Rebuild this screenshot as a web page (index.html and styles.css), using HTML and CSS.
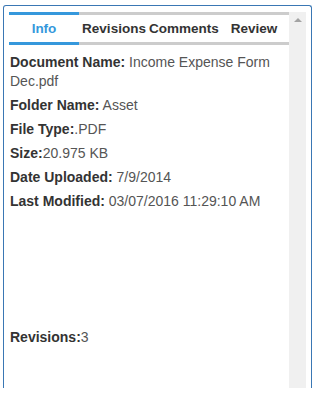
FILE: index.html
```html
<!DOCTYPE html>
<html>
<head>
<meta charset="utf-8">
<link rel="stylesheet" href="styles.css">
</head>
<body>
<div class="panel">
  <div class="content">
    <div class="tabs">
      <div class="tab active">Info</div>
      <div class="tab">Revisions</div>
      <div class="tab">Comments</div>
      <div class="tab">Review</div>
    </div>
    <div class="info">
      <p class="row"><b>Document Name:</b> Income Expense Form Dec.pdf</p>
      <p class="row"><b>Folder Name:</b> Asset</p>
      <p class="row"><b>File Type:</b>.PDF</p>
      <p class="row"><b>Size:</b>20.975 KB</p>
      <p class="row"><b>Date Uploaded:</b> 7/9/2014</p>
      <p class="row"><b>Last Modified:</b> 03/07/2016 11:29:10 AM</p>
      <div class="spacer"></div>
      <p class="row"><b>Revisions:</b>3</p>
    </div>
  </div>
  <div class="scrollbar">
    <div class="arrow"></div>
  </div>
</div>
</body>
</html>
```

FILE: styles.css
```css
html, body {
  margin: 0;
  padding: 0;
  background: #fff;
}
body {
  padding: 5px 8px 0 3px;
  font-family: "Liberation Sans", Arial, sans-serif;
}
.panel {
  display: flex;
  width: 297px;
  height: 376px;
  border: 1px solid #3a77b4;
  border-bottom: none;
  border-radius: 3px 3px 0 0;
  padding: 6px 5px 0 5px;
  overflow: hidden;
}
.content {
  flex: 1;
  min-width: 0;
}
.tabs {
  display: flex;
}
.tab {
  flex: 1;
  min-width: 0;
  display: flex;
  justify-content: center;
  white-space: nowrap;
  border-top: 3px solid #cccccc;
  border-bottom: 3px solid #cccccc;
  height: 27px;
  line-height: 27px;
  font-size: 13.5px;
  font-weight: bold;
  color: #333;
}
.tab.active {
  color: #3598dc;
  border-color: #3598dc;
}
.info {
  padding: 8px 0 0 1px;
}
.row {
  margin: 0 0 5px 0;
  font-size: 14px;
  line-height: 19px;
  color: #555;
}
.row b {
  color: #333;
}
.spacer {
  height: 112px;
}
.scrollbar {
  width: 17px;
  flex: none;
  background: #f0f0f0;
  display: flex;
  justify-content: center;
}
.arrow {
  margin-top: 6px;
  width: 0;
  height: 0;
  border-left: 4px solid transparent;
  border-right: 4px solid transparent;
  border-bottom: 4px solid #a3a3a3;
}
```
